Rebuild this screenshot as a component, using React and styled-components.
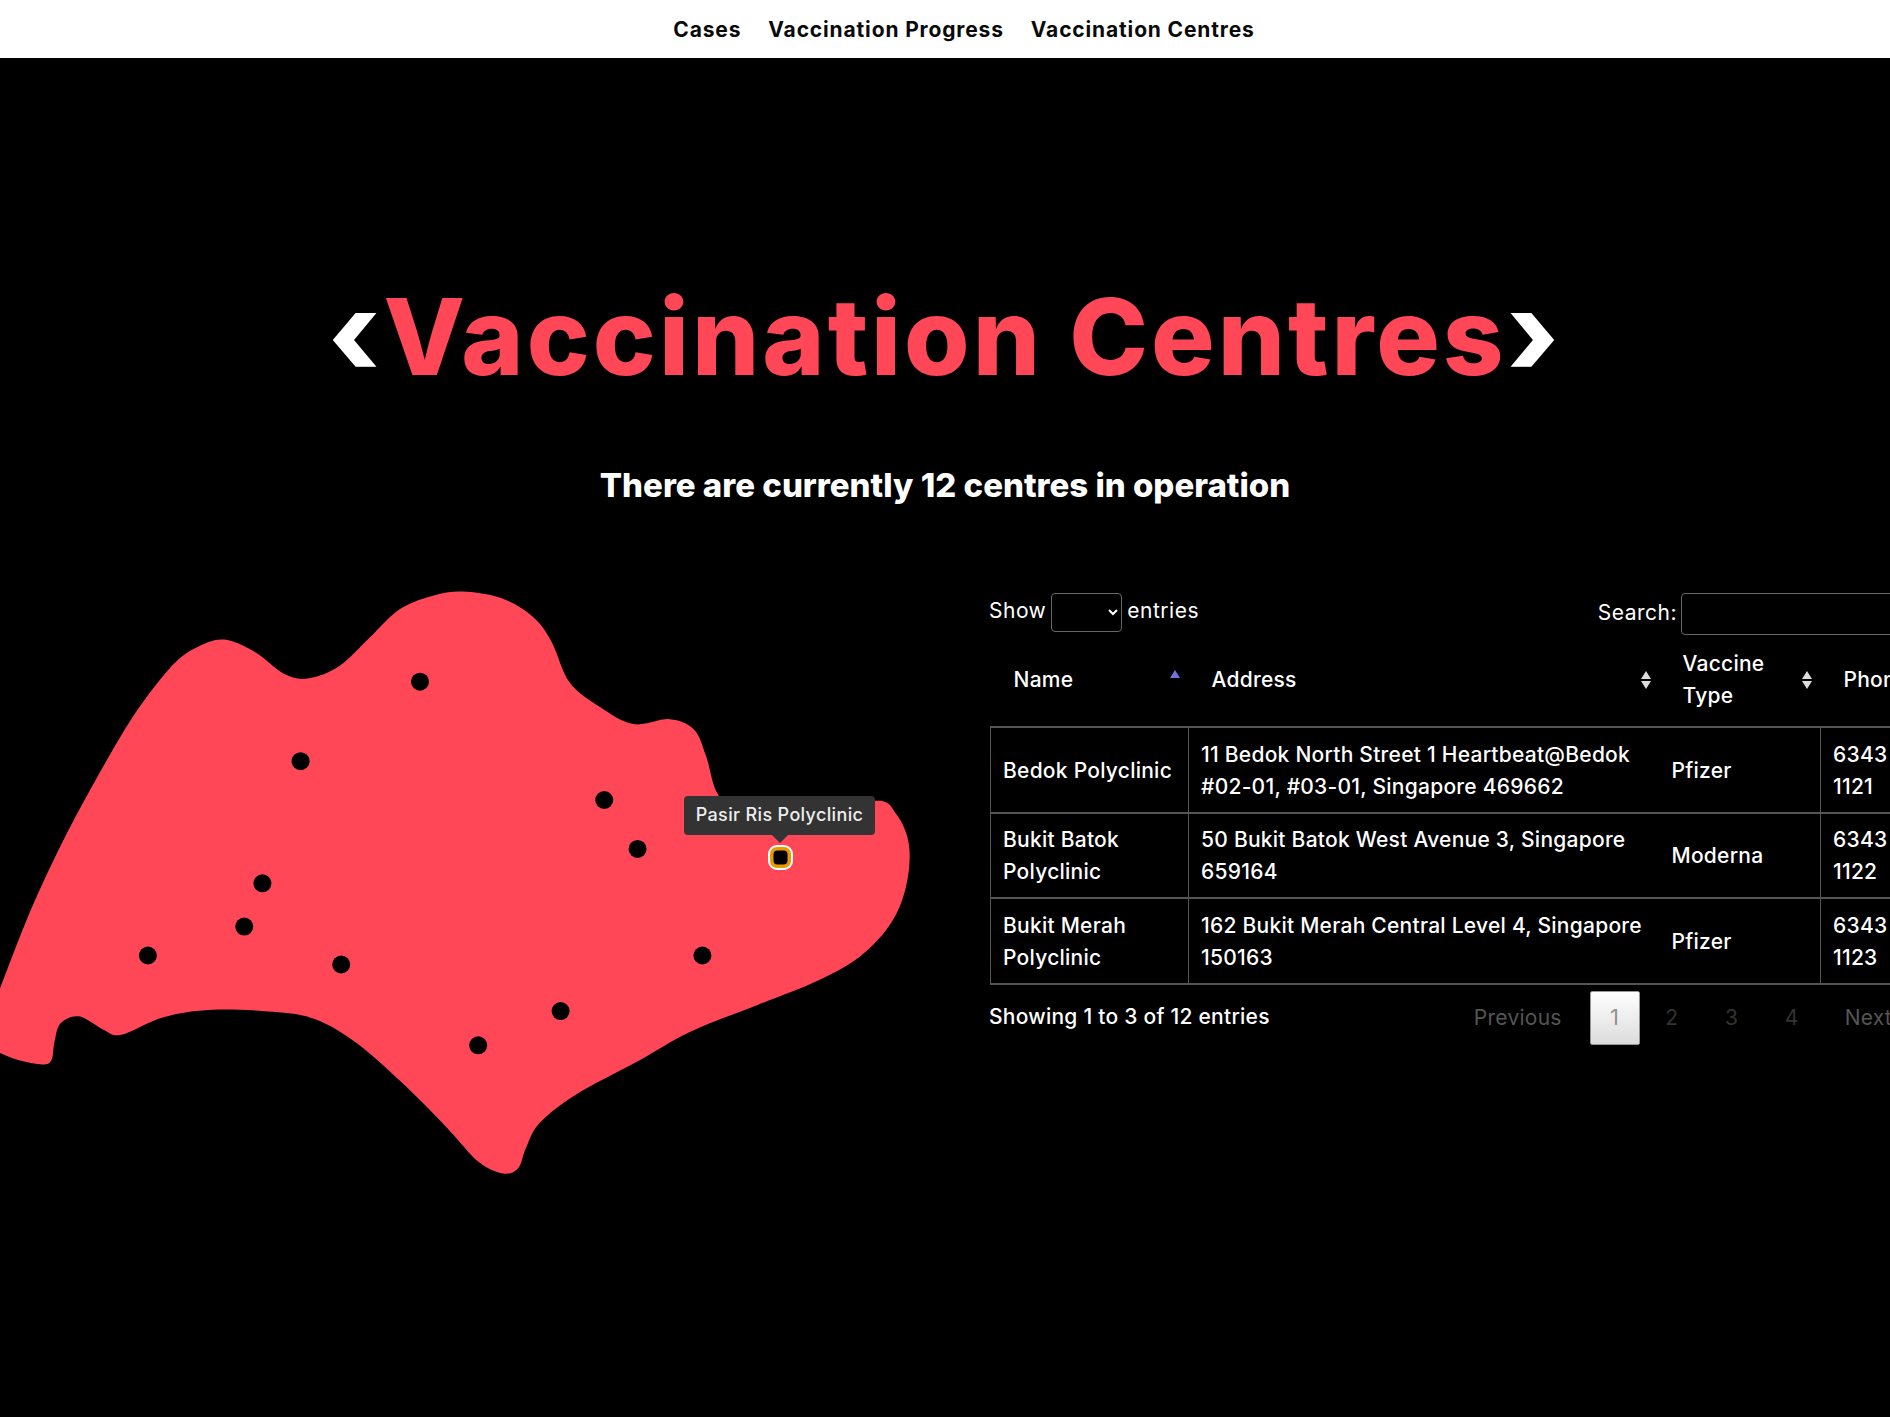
import React from "react";
import styled, { createGlobalStyle } from "styled-components";

const RED = "#ff4757";
const FONT = `Inter, "Noto Sans", "Liberation Sans", sans-serif`;

const GlobalStyle = createGlobalStyle`
  html, body {
    margin: 0;
    padding: 0;
    background: #000;
  }
  body {
    font-family: ${FONT};
    color: #fff;
  }
`;

// outline traced from the reference, in px relative to the map's top left
const OUTLINE = [
  [0, 1050], [50, 860], [100, 700], [150, 560], [200, 430], [240, 340], [290, 250], [330, 210], [370, 195],
  [420, 225], [470, 280], [510, 290], [560, 260], [610, 190], [660, 120], [720, 85],
  [770, 78], [830, 95], [880, 140], [910, 200], [940, 300], [990, 360], [1045, 402],
  [1105, 390], [1145, 415], [1165, 480], [1185, 575], [1230, 630], [1340, 640], [1445, 590],
  [1480, 625], [1500, 700], [1495, 800], [1470, 890], [1420, 970], [1350, 1030],
  [1250, 1090], [1140, 1155], [1050, 1230], [950, 1310], [890, 1380], [868, 1440],
  [855, 1490], [830, 1503], [790, 1475], [740, 1395], [670, 1290], [590, 1185],
  [520, 1125], [450, 1107], [350, 1102], [270, 1120], [200, 1163], [170, 1150],
  [130, 1118], [100, 1135], [90, 1180], [85, 1225], [70, 1236], [30, 1225], [0, 1208],
].map(([x, y]) => [x / 1.65, y / 2.45 - 30]);

const DOTS = [
  [693, 298], [496, 493], [997, 588], [1052, 708], [433, 792], [403, 898],
  [244, 969], [563, 991], [1159, 969], [925, 1105], [789, 1189],
].map(([x, y]) => [x / 1.65, y / 2.45 - 30]);

function smoothPath(pts) {
  const p = (i) => pts[Math.max(0, Math.min(pts.length - 1, i))];
  let d = `M${pts[0][0]} ${pts[0][1]}`;
  for (let i = 0; i < pts.length - 1; i++) {
    const [a, b, c, e] = [p(i - 1), p(i), p(i + 1), p(i + 2)];
    const c1 = [b[0] + (c[0] - a[0]) / 6, b[1] + (c[1] - a[1]) / 6];
    const c2 = [c[0] - (e[0] - b[0]) / 6, c[1] - (e[1] - b[1]) / 6];
    d += `C${c1[0]} ${c1[1]} ${c2[0]} ${c2[1]} ${c[0]} ${c[1]}`;
  }
  return d + "Z";
}

const ROWS = [
  {
    name: "Bedok Polyclinic",
    address: "11 Bedok North Street 1 Heartbeat@Bedok #02-01, #03-01, Singapore 469662",
    vaccine: "Pfizer",
    phone: "6343 1121",
  },
  {
    name: "Bukit Batok Polyclinic",
    address: "50 Bukit Batok West Avenue 3, Singapore 659164",
    vaccine: "Moderna",
    phone: "6343 1122",
  },
  {
    name: "Bukit Merah Polyclinic",
    address: "162 Bukit Merah Central Level 4, Singapore 150163",
    vaccine: "Pfizer",
    phone: "6343 1123",
  },
];

function App() {
  return (
    <Page>
      <GlobalStyle />
      <Nav>
        <NavLink>Cases</NavLink>
        <NavLink>Vaccination Progress</NavLink>
        <NavLink>Vaccination Centres</NavLink>
      </Nav>
      <Title>
        <Chevron>‹</Chevron>Vaccination Centres<Chevron>›</Chevron>
      </Title>
      <Subtitle>There are currently 12 centres in operation</Subtitle>
      <Content>
        <MapColumn>
          <svg width="920" height="590" viewBox="0 0 920 590">
            <path d={smoothPath(OUTLINE)} fill={RED} />
            {DOTS.map(([x, y]) => (
              <circle key={x} cx={x} cy={y} r="9" fill="#000" />
            ))}
            <rect x="768" y="255" width="25" height="25" rx="9" fill="#fff" />
            <rect x="770" y="257" width="21" height="21" rx="7" fill="#e89b00" />
            <rect x="773.5" y="260.5" width="14" height="14" rx="4" fill="#000" />
          </svg>
          <Tooltip>Pasir Ris Polyclinic</Tooltip>
        </MapColumn>
        <TableColumn>
          <Controls>
            <LengthLabel>
              <LabelText>Show</LabelText>
              <LengthSelect aria-label="entries" />
              <LabelText>entries</LabelText>
            </LengthLabel>
            <SearchLabel>
              <LabelText>Search:</LabelText>
              <SearchInput />
            </SearchLabel>
          </Controls>
          <Table>
            <colgroup>
              <col width="198" />
              <col width="471" />
              <col width="161" />
              <col width="110" />
            </colgroup>
            <thead>
              <tr>
                <HeadCell>
                  Name
                  <SortArrows $active />
                </HeadCell>
                <HeadCell>
                  Address
                  <SortArrows />
                </HeadCell>
                <HeadCell>
                  Vaccine Type
                  <SortArrows />
                </HeadCell>
                <HeadCell>
                  Phone
                  <SortArrows />
                </HeadCell>
              </tr>
            </thead>
            <tbody>
              {ROWS.map((row) => (
                <tr key={row.name}>
                  <Cell $ruled>{row.name}</Cell>
                  <Cell $ruled>{row.address}</Cell>
                  <Cell>{row.vaccine}</Cell>
                  <Cell $ruled>{row.phone}</Cell>
                </tr>
              ))}
            </tbody>
          </Table>
          <Footer>
            <Info>Showing 1 to 3 of 12 entries</Info>
            <Pager>
              <PageLink $wide>Previous</PageLink>
              <PageLink $current>1</PageLink>
              <PageLink>2</PageLink>
              <PageLink>3</PageLink>
              <PageLink>4</PageLink>
              <PageLink $wide>Next</PageLink>
            </Pager>
          </Footer>
        </TableColumn>
      </Content>
    </Page>
  );
}

const Page = styled.div`
  width: 100%;
  min-height: 1417px;
  background: #000;
  overflow: hidden;
`;

const Nav = styled.nav`
  height: 58px;
  box-sizing: border-box;
  padding: 1px 0 0 38px;
  background: #fff;
  display: flex;
  justify-content: center;
  align-items: center;
  gap: 27px;
`;

const NavLink = styled.a`
  color: #0a0a0a;
  font-size: 21px;
  font-weight: 700;
  letter-spacing: 0.85px;
`;

const Title = styled.h1`
  margin: 213px 0 0;
  height: 132px;
  line-height: 132px;
  text-align: center;
  color: ${RED};
  font-size: 106px;
  font-weight: 800;
  letter-spacing: 3px;
`;

const Chevron = styled.span`
  color: #fff;
  font-weight: 800;
  font-size: 110%;
  line-height: 1;
`;

const Subtitle = styled.h2`
  margin: 62px 0 0;
  line-height: 40px;
  text-align: center;
  color: #fff;
  font-size: 33px;
  font-weight: 800;
`;

const Content = styled.div`
  margin-top: 85px;
  display: flex;
  align-items: flex-start;
`;

const MapColumn = styled.div`
  position: relative;
  flex: 0 0 989px;
  height: 590px;
`;

const Tooltip = styled.div`
  position: absolute;
  left: 684px;
  top: 206px;
  width: 191px;
  height: 39px;
  line-height: 37px;
  text-align: center;
  background: #333;
  border-radius: 4px;
  color: #eee;
  font-size: 18px;
  font-weight: 500;
  letter-spacing: 0.35px;
  &:after {
    content: "";
    position: absolute;
    left: 50%;
    bottom: -8px;
    margin-left: -8px;
    border-style: solid;
    border-width: 8px 8px 0;
    border-color: #333 transparent transparent;
  }
`;

const TableColumn = styled.div`
  flex: 0 0 1000px;
  width: 1000px;
  font-size: 21px;
  letter-spacing: 0.25px;
  color: #fff;
`;

const Controls = styled.div`
  display: flex;
  justify-content: space-between;
  padding-top: 3px;
`;

const LengthLabel = styled.label`
  display: flex;
  align-items: center;
  gap: 5px;
  height: 39px;
`;

const LabelText = styled.span`
  margin-top: -4px;
  letter-spacing: 0.5px;
`;

const LengthSelect = styled.select`
  width: 71px;
  height: 39px;
  box-sizing: border-box;
  background: #000;
  color: #fff;
  border: 1px solid #666;
  border-radius: 4px;
  color-scheme: dark;
`;

const SearchLabel = styled.label`
  display: flex;
  align-items: center;
  gap: 4px;
  height: 42px;
`;

const SearchInput = styled.input`
  width: 308px;
  height: 42px;
  box-sizing: border-box;
  background: transparent;
  border: 1px solid #666;
  border-radius: 4px;
`;

const Table = styled.table`
  margin: 0 0 0 1px;
  width: 940px;
  table-layout: fixed;
  border-collapse: collapse;
  border-bottom: 2px solid #555;
`;

const HeadCell = styled.th`
  position: relative;
  height: 92px;
  box-sizing: border-box;
  padding: 0 44px 2px 23px;
  text-align: left;
  font-weight: 500;
  line-height: 32px;
  border-bottom: 2px solid #555;
`;

const SortArrows = styled.span`
  position: absolute;
  right: 8px;
  top: 50%;
  margin-top: -10px;
  width: 11px;
  height: 18px;
  &:before,
  &:after {
    content: "";
    position: absolute;
    left: 0;
    border-left: 5.5px solid transparent;
    border-right: 5.5px solid transparent;
  }
  &:before {
    top: ${(p) => (p.$active ? "-1px" : "0")};
    border-bottom: 8px solid ${(p) => (p.$active ? "#7272e0" : "#ddd")};
  }
  &:after {
    bottom: 0;
    border-top: 8px solid ${(p) => (p.$active ? "transparent" : "#ddd")};
  }
`;

const Cell = styled.td`
  height: 85.5px;
  box-sizing: border-box;
  padding: 2px 12px 0;
  line-height: 32px;
  font-weight: 500;
  border-top: 2px solid #555;
  border-left: ${(p) => (p.$ruled ? "1px solid #555" : "none")};
`;

const Footer = styled.div`
  display: flex;
  justify-content: space-between;
  align-items: center;
  width: 921px;
  margin-top: 6px;
`;

const Info = styled.div`
  font-weight: 500;
  margin-top: -2px;
`;

const Pager = styled.div`
  display: flex;
  gap: 10px;
  align-items: center;
`;

const PageLink = styled.a`
  box-sizing: border-box;
  height: 54px;
  width: ${(p) => (p.$wide ? "auto" : "50px")};
  padding: ${(p) => (p.$wide ? "0 18px" : "0")};
  margin-right: ${(p) => (p.$current ? "-3px" : "0")};
  display: flex;
  align-items: center;
  justify-content: center;
  color: ${(p) => (p.$current ? "#8f8f8f" : p.$wide ? "#555" : "#333")};
  background: ${(p) => (p.$current ? "linear-gradient(#fff, #dcdcdc)" : "none")};
  border: ${(p) => (p.$current ? "1px solid #979797" : "none")};
  border-radius: 2px;
`;

export default App;
